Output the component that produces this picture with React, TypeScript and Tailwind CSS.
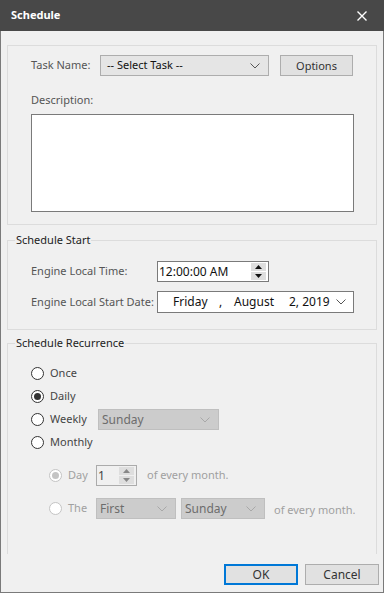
import type { ReactNode } from "react";

const font = { fontFamily: '"Noto Sans", "Open Sans", sans-serif' };

function Chevron({ color = "#555" }: { color?: string }) {
  return (
    <svg width="10" height="6" viewBox="0 0 10 6" className="shrink-0">
      <path d="M0.5 0.5 L5 5 L9.5 0.5" fill="none" stroke={color} strokeWidth="1" />
    </svg>
  );
}

function Spinner({ disabled = false }: { disabled?: boolean }) {
  const arrow = disabled ? "#888" : "#111";
  return (
    <div className="flex flex-col w-[15px] h-[17px] gap-[1px] mr-[2px]">
      <div className="flex-1 flex items-center justify-center bg-[#dedede]">
        <svg width="7" height="4" viewBox="0 0 7 4">
          <path d="M0 4 L3.5 0 L7 4 Z" fill={arrow} />
        </svg>
      </div>
      <div className="flex-1 flex items-center justify-center bg-[#dedede]">
        <svg width="7" height="4" viewBox="0 0 7 4">
          <path d="M0 0 L3.5 4 L7 0 Z" fill={arrow} />
        </svg>
      </div>
    </div>
  );
}

function Radio({ checked = false, disabled = false }: { checked?: boolean; disabled?: boolean }) {
  return (
    <span
      className={`w-[13px] h-[13px] rounded-full border flex items-center justify-center shrink-0 bg-white ${
        disabled ? "border-[#c4c4c4]" : "border-[#333]"
      }`}
    >
      {checked && (
        <span className={`w-[7px] h-[7px] rounded-full ${disabled ? "bg-[#c4c4c4]" : "bg-[#333]"}`} />
      )}
    </span>
  );
}

function DisabledSelect({ value, width }: { value: string; width: string }) {
  return (
    <div
      className={`${width} h-[21px] flex items-center justify-between bg-[#cccccc] border border-[#bfbfbf] pl-[3px] pr-[8px] text-[#6d6d6d] text-[12px]`}
    >
      <span>{value}</span>
      <Chevron color="#a8a8a8" />
    </div>
  );
}

function Group({ title, children, className }: { title: string; children: ReactNode; className: string }) {
  return (
    <fieldset className={`border border-[#dcdcdc] ${className}`}>
      <legend className="ml-[7px] px-[1px] text-[#222] leading-[16px]">{title}</legend>
      <div className="pl-[23px]">{children}</div>
    </fieldset>
  );
}

export default function App() {
  return (
    <div className="w-[384px] h-[593px] flex flex-col bg-[#f0f0f0] text-[11px] whitespace-nowrap" style={font}>
      {/* title bar */}
      <div className="h-[31px] shrink-0 bg-[#484848] flex items-center justify-between pl-[11px] pr-[17px]">
        <span className="text-white font-bold">Schedule</span>
        <svg width="10" height="10" viewBox="0 0 10 10">
          <path d="M0.5 0.5 L9.5 9.5 M9.5 0.5 L0.5 9.5" stroke="#fff" strokeWidth="1.4" />
        </svg>
      </div>

      <div className="flex-1 flex flex-col border-x border-b border-[#7a7a7a] px-[6px]">
        {/* task */}
        <div className="mt-[14px] w-[370px] h-[180px] border border-[#dcdcdc] pl-[23px] pt-[9px]">
          <div className="flex items-center">
            <span className="w-[69px] text-[#555]">Task Name:</span>
            <div className="w-[169px] h-[21px] flex items-center justify-between bg-[#e5e5e5] border border-[#adadad] pl-[6px] pr-[8px] text-[#111]">
              <span>-- Select Task --</span>
              <Chevron />
            </div>
            <button className="ml-[11px] w-[73px] h-[21px] bg-[#e1e1e1] border border-[#adadad] text-[#333] leading-none">
              Options
            </button>
          </div>
          <div className="mt-[16px] leading-[16px] text-[#555]">Description:</div>
          <div className="mt-[6px] w-[323px] h-[98px] bg-white border border-[#7a7a7a]" />
        </div>

        {/* start */}
        <Group title="Schedule Start" className="mt-[7px] w-[370px] pb-[16px]">
          <div className="mt-[13px] flex items-center">
            <span className="w-[126px] text-[#555]">Engine Local Time:</span>
            <div className="w-[112px] h-[21px] flex items-center justify-between bg-white border border-[#7a7a7a] pl-[1px] text-[#111] text-[12px]">
              <span>12:00:00 AM</span>
              <Spinner />
            </div>
          </div>
          <div className="mt-[9px] flex items-center">
            <span className="w-[126px] text-[#555]">Engine Local Start Date:</span>
            <div className="w-[197px] h-[22px] flex items-center bg-white border border-[#7a7a7a] pl-[15px] pr-[7px] text-[#111] text-[12px]">
              <span className="w-[46px]">Friday</span>
              <span className="w-[15px]">,</span>
              <span className="w-[55px]">August</span>
              <span className="flex-1">2, 2019</span>
              <Chevron />
            </div>
          </div>
        </Group>

        {/* recurrence */}
        <Group title="Schedule Recurrence" className="mt-[5px] w-[370px] h-[219px] border-b-0">
          <div className="pt-[11px]">
            <div className="h-[23px] flex items-center gap-[6px] text-[#444]">
              <Radio />
              <span>Once</span>
            </div>
            <div className="h-[23px] flex items-center gap-[6px] text-[#444]">
              <Radio checked />
              <span>Daily</span>
            </div>
            <div className="h-[23px] flex items-center gap-[6px] text-[#444]">
              <Radio />
              <span className="w-[42px]">Weekly</span>
              <DisabledSelect value="Sunday" width="w-[121px]" />
            </div>
            <div className="h-[23px] flex items-center gap-[6px] text-[#444]">
              <Radio />
              <span>Monthly</span>
            </div>

            <div className="mt-[11px] pl-[18px] h-[21px] flex items-center text-[#a0a0a0]">
              <Radio checked disabled />
              <span className="ml-[6px] w-[28px]">Day</span>
              <div className="w-[41px] h-[21px] flex items-center justify-between border border-[#ababab] pl-[1px] text-[#444] text-[12px]">
                <span>1</span>
                <Spinner disabled />
              </div>
              <span className="ml-[10px]">of every month.</span>
            </div>

            <div className="mt-[12px] pl-[18px] h-[21px] flex items-center text-[#a0a0a0]">
              <Radio disabled />
              <span className="ml-[6px] w-[28px]">The</span>
              <DisabledSelect value="First" width="w-[80px]" />
              <div className="ml-[5px]">
                <DisabledSelect value="Sunday" width="w-[84px]" />
              </div>
              <span className="ml-[9px] mt-[3px]">of every month.</span>
            </div>
          </div>
        </Group>

        {/* footer */}
        <div className="mt-auto mb-[7px] mr-[-2px] flex justify-end gap-[7px]">
          <button className="w-[74px] h-[21px] bg-[#e1e1e1] border-2 border-[#0078d7] text-[#333] text-[12px] leading-none">
            OK
          </button>
          <button className="w-[74px] h-[21px] bg-[#e1e1e1] border border-[#adadad] text-[#333] text-[12px] leading-none">
            Cancel
          </button>
        </div>
      </div>
    </div>
  );
}
